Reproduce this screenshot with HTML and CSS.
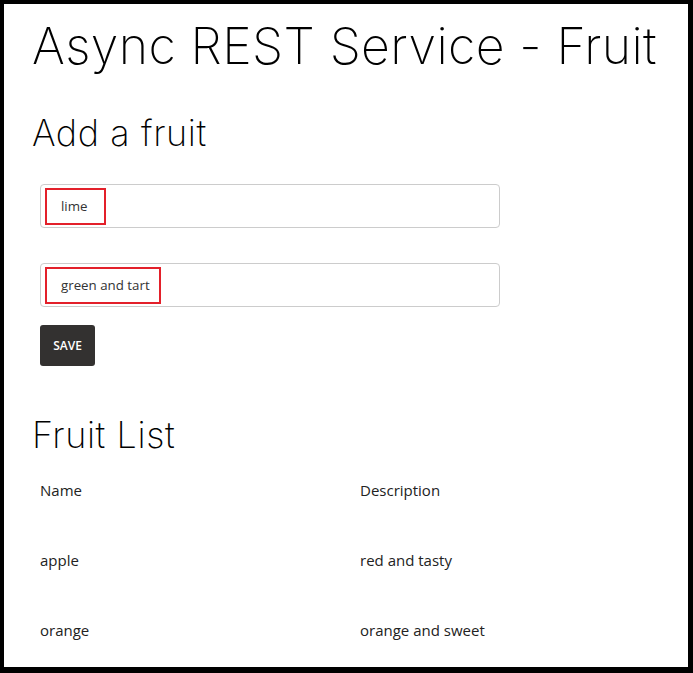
FILE: index.html
```html
<!DOCTYPE html>
<html>
<head>
<meta charset="utf-8">
<link rel="stylesheet" href="styles.css">
</head>
<body>
<div class="frame">
  <h1 class="title">Async REST Service - Fruit</h1>
  <h2 class="section add-title">Add a fruit</h2>
  <div class="form">
    <div class="field"><span class="mark mark-name">lime</span></div>
    <div class="field field-second"><span class="mark mark-desc">green and tart</span></div>
    <button class="save">SAVE</button>
  </div>
  <h2 class="section list-title">Fruit List</h2>
  <div class="table">
    <div class="cell">Name</div><div class="cell">Description</div>
    <div class="cell">apple</div><div class="cell">red and tasty</div>
    <div class="cell">orange</div><div class="cell">orange and sweet</div>
  </div>
</div>
</body>
</html>
```

FILE: styles.css
```css
html, body {
  margin: 0;
  padding: 0;
  background: #000;
}
.frame {
  box-sizing: border-box;
  width: 693px;
  height: 673px;
  border-style: solid;
  border-color: #000;
  border-width: 4px 5px 6px 4px;
  background: #fff;
  padding: 12px 0 0 28px;
  overflow: hidden;
  font-family: "Open Sans", "Liberation Sans", sans-serif;
  color: #222;
}
.title {
  margin: 0;
  font-family: Inter, Lato, sans-serif;
  font-weight: 200;
  font-size: 50px;
  line-height: 60px;
  color: #000;
  letter-spacing: 0.38px;
  white-space: nowrap;
}
.section {
  margin: 0;
  font-family: Inter, Lato, sans-serif;
  font-weight: 200;
  font-size: 36px;
  line-height: 40px;
  color: #000;
  letter-spacing: 0.6px;
}
.add-title { margin-top: 37px; }
.list-title { margin-top: 49px; }
.form {
  margin-top: 31px;
  padding-left: 8px;
  display: flex;
  flex-direction: column;
  align-items: flex-start;
}
.field {
  box-sizing: border-box;
  width: 460px;
  height: 44px;
  border: 1px solid #ccc;
  border-radius: 4px;
  display: flex;
  align-items: center;
  padding-left: 4px;
}
.field-second { margin-top: 35px; }
.mark {
  box-sizing: border-box;
  height: 37px;
  border: 2px solid #e3202a;
  display: flex;
  align-items: center;
  padding: 0 0 0 14px;
  font-size: 13.3px;
  color: #333;
}
.mark-name { width: 61px; }
.mark-desc { width: 116px; }
.save {
  margin-top: 18px;
  width: 55px;
  height: 41px;
  border: none;
  border-radius: 3px;
  background: #333130;
  color: #fff;
  font-family: "Open Sans", "Liberation Sans", sans-serif;
  font-weight: 600;
  font-size: 12px;
  padding: 0;
}
.table {
  margin-left: 8px;
  display: grid;
  grid-template-columns: 320px 1fr;
  grid-auto-rows: 70px;
  font-size: 15px;
}
.cell {
  display: flex;
  align-items: center;
  color: #222;
}
```
